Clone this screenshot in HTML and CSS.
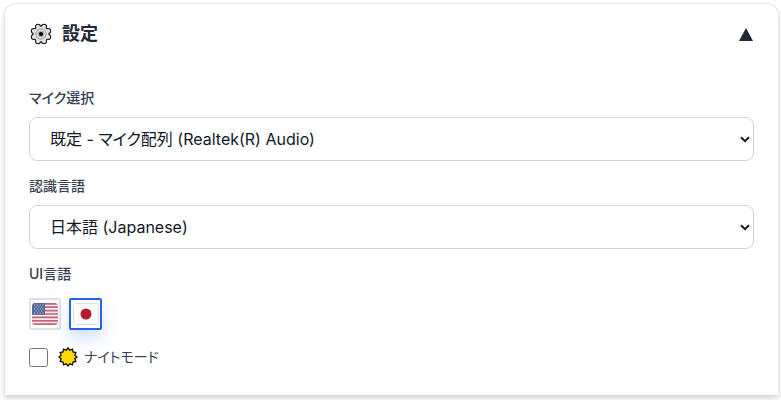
FILE: index.html
```html
<!DOCTYPE html>
<html lang="ja">
<head>
<meta charset="utf-8">
<meta name="viewport" content="width=device-width, initial-scale=1">
<title>設定</title>
<link rel="stylesheet" href="styles.css">
</head>
<body>
<section class="card">
  <button class="card-header" type="button" aria-expanded="true" aria-controls="settings">
    <svg class="gear" viewBox="0 0 22 22" aria-hidden="true">
      <defs>
        <g id="teeth">
          <circle cx="11" cy="11" r="7.6"/>
          <circle cx="8" cy="3.8" r="2"/><circle cx="14" cy="3.8" r="2"/>
          <circle cx="18.200" cy="8" r="2"/><circle cx="18.200" cy="14" r="2"/>
          <circle cx="14" cy="18.200" r="2"/><circle cx="8" cy="18.200" r="2"/>
          <circle cx="3.8" cy="14" r="2"/><circle cx="3.8" cy="8" r="2"/>
        </g>
      </defs>
      <use href="#teeth" fill="#111" stroke="#111" stroke-width="2"/>
      <use href="#teeth" fill="#e2e2e2"/>
      <circle cx="11" cy="11" r="5.2" fill="#d4d4d4" stroke="#999" stroke-width=".8"/>
      <circle cx="11" cy="11" r="3" fill="#aaa"/>
      <circle cx="11" cy="11" r="2" fill="#000"/>
    </svg>
    <span class="title">設定</span>
    <svg class="arrow" viewBox="0 0 14 13" aria-hidden="true"><path d="M7 0l7 13H0z" fill="#1f2937"/></svg>
  </button>
  <form class="card-body" id="settings">
    <div class="field">
      <label for="mic">マイク選択</label>
      <div class="select-box">
        <select id="mic"><option>既定 - マイク配列 (Realtek(R) Audio)</option></select>
        <svg class="chevron" viewBox="0 0 10 7" aria-hidden="true"><path d="M1 1.2l4 4 4-4"/></svg>
      </div>
    </div>
    <div class="field">
      <label for="lang">認識言語</label>
      <div class="select-box">
        <select id="lang"><option>日本語 (Japanese)</option></select>
        <svg class="chevron" viewBox="0 0 10 7" aria-hidden="true"><path d="M1 1.2l4 4 4-4"/></svg>
      </div>
    </div>
    <div class="field flags-field" role="group" aria-labelledby="ui-lang">
      <span class="label" id="ui-lang">UI言語</span>
      <div class="flags">
        <button class="flag" type="button" aria-label="English" aria-pressed="false">
          <svg viewBox="0 0 26 22" aria-hidden="true">
            <defs><clipPath id="us"><rect width="26" height="22" rx="3.5"/></clipPath></defs>
            <g clip-path="url(#us)">
              <path fill="#f5eff0" d="M0 0h26v22H0z"/>
              <path stroke="#c8637a" stroke-width="1.7" d="M0 .85h26M0 4.2h26M0 7.6h26M0 11h26M0 14.4h26M0 17.8h26M0 21.15h26"/>
              <path fill="#526c98" d="M0 0h13v11.8H0z"/>
              <path stroke="#b5c2d8" stroke-width="1.1" stroke-dasharray="1.1 1.7" d="M2 2h10M3.4 4h8M2 6h10M3.4 8h8M2 10h10"/>
            </g>
          </svg>
        </button>
        <button class="flag selected" type="button" aria-label="日本語" aria-pressed="true">
          <svg viewBox="0 0 26 22" aria-hidden="true">
            <rect x=".5" y=".5" width="25" height="21" rx="3" fill="#fff" stroke="#dedede"/>
            <circle cx="13" cy="11" r="5.5" fill="#b21e30"/>
          </svg>
        </button>
      </div>
    </div>
    <label class="night">
      <input type="checkbox">
      <svg class="sun" viewBox="-10 -10 20 20" aria-hidden="true">
        <path fill="#ffd900" stroke="#111" stroke-width="1.3" stroke-linejoin="miter" d="M0-9L1.8-6.8 4.5-7.8 5-5 7.8-4.5 6.8-1.8 9 0 6.8 1.8 7.8 4.5 5 5 4.5 7.8 1.8 6.8 0 9-1.8 6.8-4.5 7.8-5 5-7.8 4.5-6.8 1.8-9 0-6.8-1.8-7.8-4.5-5-5-4.5-7.8-1.8-6.8z"/>
      </svg>
      <span>ナイトモード</span>
    </label>
  </form>
</section>
</body>
</html>
```
FILE: styles.css
```css
* {
  box-sizing: border-box;
}

body {
  margin: 0;
  padding: 3px 2px 5px 4px;
  background: #fff;
  color: #1f2937;
  font-family: Inter, "Noto Sans CJK JP", sans-serif;
  font-feature-settings: "palt";
}

.card {
  border: 1px solid #e5e7eb;
  border-bottom: 0;
  border-radius: 12px 12px 0 0;
  background: #fff;
  box-shadow: 0 4px 6px -1px rgb(0 0 0 / 20%);
}

.card-header {
  display: flex;
  align-items: center;
  width: 100%;
  padding: 16px 25px;
  border: 0;
  background: none;
  color: inherit;
  font: inherit;
  text-align: left;
}

.gear {
  width: 22px;
  height: 22px;
  margin-right: 10px;
}

.title {
  flex: 1;
  font-size: 18px;
  font-weight: 600;
  line-height: 28px;
}

.arrow {
  width: 14px;
  height: 13px;
}

.card-body {
  display: flex;
  flex-direction: column;
  gap: 15px;
  padding: 24px 24px 26px;
}

.field {
  display: flex;
  flex-direction: column;
  gap: 9px;
  color: #374151;
  font-size: 14px;
  font-weight: 500;
  line-height: 20px;
}

.flags-field {
  gap: 14px;
}

.select-box {
  display: grid;
  align-items: center;
}

.select-box > * {
  grid-area: 1 / 1;
}

select {
  width: 100%;
  height: 44px;
  padding: 0 20px;
  appearance: none;
  border: 1px solid #d1d5db;
  border-radius: 8px;
  background: #fff;
  color: #111827;
  font-family: inherit;
  font-feature-settings: inherit;
  font-size: 16px;
  font-weight: 400;
}

.chevron {
  justify-self: end;
  width: 10px;
  height: 7px;
  margin-right: 4px;
  fill: none;
  stroke: #111827;
  stroke-width: 2;
  pointer-events: none;
}

.flags {
  display: flex;
  gap: 8px;
}

.flag {
  display: flex;
  align-items: center;
  justify-content: center;
  width: 32px;
  height: 32px;
  padding: 0;
  border: 2px solid #dee2e6;
  border-radius: 2px;
  background: #fff;
}

.flag svg {
  flex: none;
  width: 26px;
  height: 22px;
}

.flag.selected {
  width: 33px;
  border-color: #2563eb;
  box-shadow: 0 8px 16px rgb(37 99 235 / 20%);
}

.night {
  display: flex;
  align-items: center;
  color: #374151;
  font-size: 14px;
  line-height: 24px;
}

.night input {
  width: 19px;
  height: 19px;
  margin: 0 10px 0 0;
}

.sun {
  width: 20px;
  height: 20px;
  margin-right: 6px;
}
```
